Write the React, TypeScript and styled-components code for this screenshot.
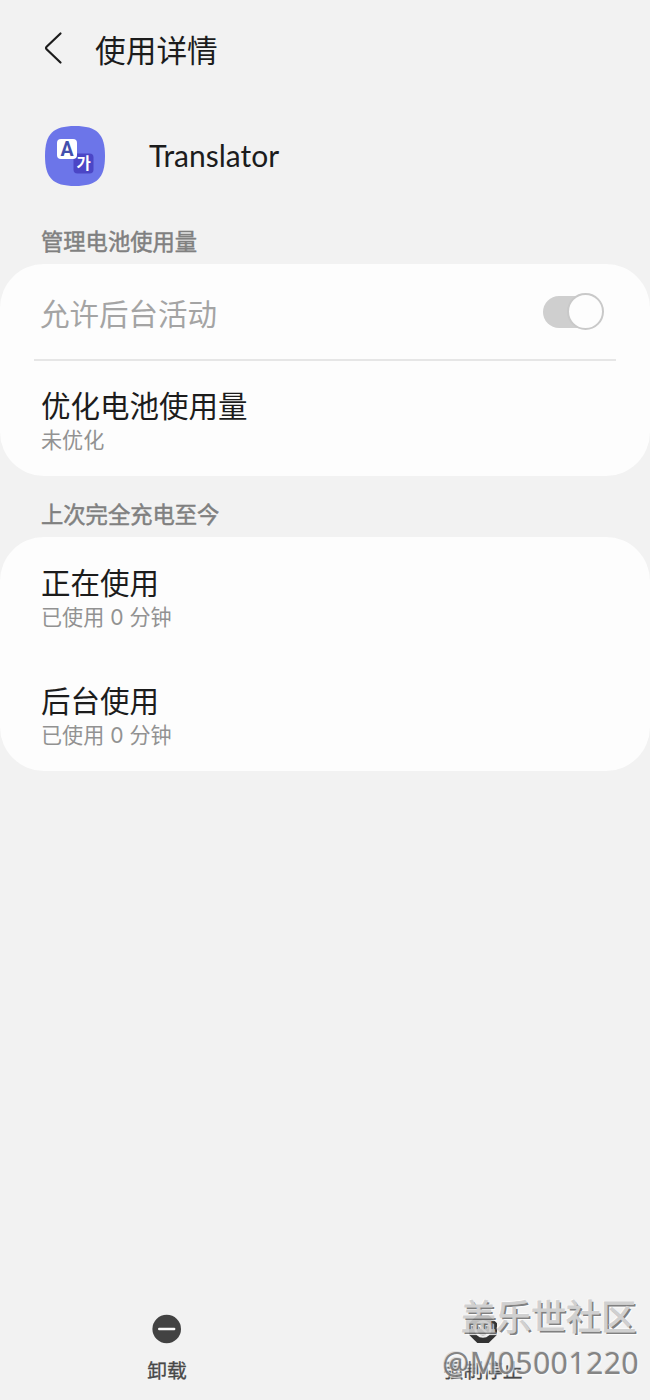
import React from "react";
import styled, { createGlobalStyle } from "styled-components";

const GlobalStyle = createGlobalStyle`
  html, body { margin: 0; background: #f2f2f2; }
  *, *::before, *::after { box-sizing: border-box; }
`;

const Screen = styled.main`
  position: relative;
  display: flex;
  flex-direction: column;
  width: 650px;
  height: 1400px;
  overflow: hidden;
  background: #f2f2f2;
  color: #1c1c1c;
  font-family: "Noto Sans CJK SC", sans-serif;
`;

const TopBar = styled.header`
  display: flex;
  align-items: center;
  height: 96px;
  padding-left: 42px;
`;

const BackButton = styled.button`
  display: flex;
  width: 53px;
  padding: 0;
  border: 0;
  background: none;
`;

const Title = styled.h1`
  margin: 0;
  padding-top: 2px;
  font-size: 30.7px;
  font-weight: 400;
  line-height: 44px;
`;

const AppHeader = styled.section`
  display: flex;
  align-items: center;
  gap: 44px;
  height: 120px;
  padding-left: 45px;
`;

const AppName = styled.span`
  padding-bottom: 2px;
  font-family: Lato, sans-serif;
  font-size: 30px;
  line-height: 36px;
`;

const SectionLabel = styled.h2<{ $height: number }>`
  display: flex;
  align-items: flex-end;
  height: ${(p) => p.$height}px;
  margin: 0;
  padding: 0 0 8px 41px;
  color: #808080;
  font-size: 22.3px;
  font-weight: 400;
  line-height: 32px;
  -webkit-text-stroke: 0.5px #808080;
`;

const Card = styled.section<{ $height: number }>`
  height: ${(p) => p.$height}px;
  padding: 0 34px;
  border-radius: 44px;
  background: #fdfdfd;
`;

const SwitchRow = styled.div`
  display: flex;
  align-items: center;
  justify-content: space-between;
  height: 97px;
  padding: 0 12px 0 6px;
  border-bottom: 2px solid #e6e6e6;
`;

const Row = styled.div<{ $height: number; $top: number }>`
  height: ${(p) => p.$height}px;
  padding: ${(p) => p.$top}px 7px 0;
`;

const RowTitle = styled.div<{ $muted?: boolean }>`
  color: ${(p) => (p.$muted ? "#a4a4a4" : "#1c1c1c")};
  font-size: 29.5px;
  line-height: 40px;
`;

const RowNote = styled.div`
  padding-top: 1px;
  color: #929292;
  font-family: Inter, "Noto Sans CJK SC", sans-serif;
  font-size: 21.1px;
  line-height: 31px;
  white-space: pre;
`;

const Toggle = styled.div`
  display: flex;
  align-items: center;
  justify-content: flex-end;
  width: 61px;
  height: 32px;
  border-radius: 16px;
  background: linear-gradient(90deg, #cfcfcf 50px, transparent 50px);
`;

const Thumb = styled.span`
  flex: none;
  width: 37px;
  height: 37px;
  border: 2px solid #c9c9c9;
  border-radius: 50%;
  background: #fdfdfd;
`;

const BottomBar = styled.footer`
  display: flex;
  justify-content: space-between;
  margin-top: auto;
  height: 86px;
  padding: 0 117px;
`;

const Action = styled.button`
  display: flex;
  flex-direction: column;
  align-items: center;
  width: 100px;
  padding: 0;
  border: 0;
  background: none;
  color: #484848;
  font: 400 19.8px/30px "Noto Sans CJK SC", sans-serif;
  -webkit-text-stroke: 0.3px #484848;
  white-space: nowrap;

  svg { display: block; margin-bottom: 11px; }
`;

const Watermark = styled.div`
  position: absolute;
  right: 12px;
  bottom: 16px;
  text-align: right;
  pointer-events: none;
`;

const Community = styled.div`
  padding: 0 2px 4px 0;
  color: #cdcdcd;
  font-size: 35px;
  font-weight: 400;
  line-height: 46px;
  -webkit-text-stroke: 0.8px #cdcdcd;
  text-shadow: 2px 2px 0 #747474, -1px -1px 1px #fff, 3px 3px 1px #fff;
  opacity: 0.9;
`;

const Author = styled.div`
  margin-right: -1px;
  color: #7c7c7c;
  font-family: "Noto Sans", sans-serif;
  font-size: 30.3px;
  letter-spacing: 0.35px;
  line-height: 42px;
  text-shadow: -1px -1px 0 #dedede, -1px -1px 2px #fff, 1px 1px 2px #fff;
  opacity: 0.92;
`;

const BackIcon = () => (
  <svg width="24" height="36" viewBox="0 0 24 36" fill="none">
    <path d="M18.5 3.5 4.600 16.800q-1.200 1.200 0 2.400L18.500 32.500" stroke="#1c1c1c" strokeWidth="2.200" strokeLinecap="round" strokeLinejoin="round" />
  </svg>
);

const TranslatorIcon = () => (
  <svg width="60" height="60" viewBox="0 0 60 60">
    <path d="M30 0C52 0 60 8 60 30S52 60 30 60 0 52 0 30 8 0 30 0Z" fill="#6c75e9" />
    <rect x="28.500" y="27.500" width="20" height="20" rx="4" fill="#4b46c6" />
    <rect x="12" y="13" width="20" height="20" rx="4" fill="#fff" />
    <text x="22" y="30" textAnchor="middle" fill="#4350ad" fontFamily="Roboto, sans-serif" fontSize="19.500" fontWeight="700">A</text>
    <text x="38.700" y="43.300" textAnchor="middle" fill="#fff" fontFamily="Noto Sans CJK KR, sans-serif" fontSize="15.500" fontWeight="700">가</text>
  </svg>
);

const UninstallIcon = () => (
  <svg width="30" height="30" viewBox="0 0 30 30">
    <circle cx="14.700" cy="15" r="14.300" fill="#424242" />
    <path d="M7.200 15h15" stroke="#fafafa" strokeWidth="2.400" strokeLinecap="round" />
  </svg>
);

const StopIcon = () => (
  <svg width="30" height="30" viewBox="0 0 30 30">
    <path d="M9.300 1h11.400L29 9.300v11.400L20.700 29H9.300L1 20.700V9.300Z" fill="#333" />
    <circle cx="15" cy="15" r="7.500" fill="none" stroke="#eee" strokeWidth="2.400" />
    <path d="m10 10 10 10" stroke="#eee" strokeWidth="2.400" />
  </svg>
);

export default function App() {
  return (
    <>
      <GlobalStyle />
      <Screen>
        <TopBar>
          <BackButton aria-label="返回"><BackIcon /></BackButton>
          <Title>使用详情</Title>
        </TopBar>
        <AppHeader>
          <TranslatorIcon />
          <AppName>Translator</AppName>
        </AppHeader>
        <SectionLabel $height={48}>管理电池使用量</SectionLabel>
        <Card $height={212}>
          <SwitchRow>
            <RowTitle $muted>允许后台活动</RowTitle>
            <Toggle role="switch" aria-checked="true"><Thumb /></Toggle>
          </SwitchRow>
          <Row $height={115} $top={23}>
            <RowTitle>优化电池使用量</RowTitle>
            <RowNote>未优化</RowNote>
          </Row>
        </Card>
        <SectionLabel $height={61}>上次完全充电至今</SectionLabel>
        <Card $height={234}>
          <Row $height={117} $top={24}>
            <RowTitle>正在使用</RowTitle>
            <RowNote>已使用 0 分钟</RowNote>
          </Row>
          <Row $height={117} $top={25}>
            <RowTitle>后台使用</RowTitle>
            <RowNote>已使用 0 分钟</RowNote>
          </Row>
        </Card>
        <BottomBar>
          <Action><UninstallIcon />卸载</Action>
          <Action><StopIcon />强制停止</Action>
        </BottomBar>
        <Watermark>
          <Community>盖乐世社区</Community>
          <Author>@M05001220</Author>
        </Watermark>
      </Screen>
    </>
  );
}
